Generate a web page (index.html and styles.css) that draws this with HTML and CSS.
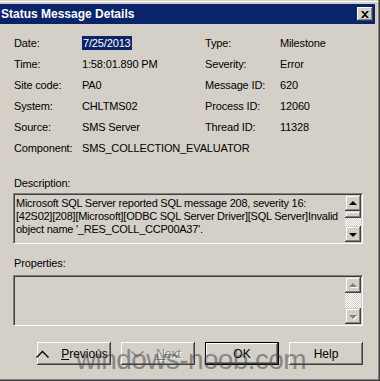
FILE: index.html
```html
<!DOCTYPE html>
<html lang="en">
<head>
    <meta charset="UTF-8">
    <title>Status Message Details</title>
    <link rel="stylesheet" href="styles.css">
</head>
<body>
    <div class="window">
        <div class="titlebar">
            <span class="title">Status Message Details</span>
            <span class="close">
                <svg width="8" height="7" viewBox="0 0 8 7"><path d="M0 0h2l2 2 2-2h2L5 3.5 8 7H6L4 5 2 7H0l3-3.5z" fill="#000"/></svg>
            </span>
        </div>

        <div class="content">
            <div class="fields">
                <span>Date:</span><span><span class="selected">7/25/2013</span></span>
                <span>Type:</span><span>Milestone</span>
                <span>Time:</span><span>1:58:01.890 PM</span>
                <span>Severity:</span><span>Error</span>
                <span>Site code:</span><span>PA0</span>
                <span>Message ID:</span><span>620</span>
                <span>System:</span><span>CHLTMS02</span>
                <span>Process ID:</span><span>12060</span>
                <span>Source:</span><span>SMS Server</span>
                <span>Thread ID:</span><span>11328</span>
                <span>Component:</span><span class="wide">SMS_COLLECTION_EVALUATOR</span>
            </div>

            <div class="group-label desc-label">Description:</div>
            <div class="sunken">
                <div class="text">Microsoft SQL Server reported SQL message 208, severity 16:<br>[42S02][208][Microsoft][ODBC SQL Server Driver][SQL Server]Invalid<br>object name '_RES_COLL_CCP00A37'.</div>
                <div class="scrollbar">
                    <span class="sb-btn"><span class="arrow up"></span></span>
                    <span class="sb-btn thumb"></span>
                    <span class="track"></span>
                    <span class="sb-btn"><span class="arrow down"></span></span>
                </div>
            </div>

            <div class="group-label props-label">Properties:</div>
            <div class="sunken">
                <div class="text"></div>
                <div class="scrollbar">
                    <span class="sb-btn"><span class="arrow up off"></span></span>
                    <span class="track"></span>
                    <span class="sb-btn"><span class="arrow down off"></span></span>
                </div>
            </div>

            <div class="buttons">
                <button class="button">
                    <svg class="chev" width="13" height="8" viewBox="0 0 13 8"><path d="M0.5 7.5L6.5 1.5L12.5 7.5" stroke="#000" stroke-width="1.4" fill="none"/></svg>
                    <span><u>P</u>revious</span>
                </button>
                <button class="button disabled">
                    <svg class="chev" width="13" height="8" viewBox="0 0 13 8"><path d="M0.5 1.5L6.5 7L12.5 1.5" stroke="#808080" stroke-width="1.4" fill="none"/></svg>
                    <span><u>N</u>ext</span>
                </button>
                <button class="button default">OK</button>
                <button class="button">Help</button>
            </div>
        </div>

        <div class="watermark">windows-noob.com</div>
    </div>
</body>
</html>
```

FILE: styles.css
```css
body {
    margin: 0;
    background: #d4d0c8;
    font-family: 'Liberation Sans', Arial, sans-serif;
    font-size: 11px;
    letter-spacing: -0.15px;
    color: #000;
}
.window {
    position: relative;
    width: 380px;
    height: 381px;
    box-sizing: border-box;
    padding: 4px 4px 0 0;
    background: #d4d0c8;
    border-right: 1px solid #404040;
    border-bottom: 1px solid #404040;
    box-shadow: inset -1px -1px #808080, inset 0 1px #d4d0c8, inset 0 2px #fff;
    overflow: hidden;
}
.titlebar {
    height: 20px;
    background: #0a246a;
    color: #fff;
    display: flex;
    align-items: center;
    justify-content: space-between;
    padding: 0 2px 0 1px;
}
.title {
    font-weight: bold;
    font-size: 12px;
    letter-spacing: 0;
}
.close {
    width: 16px;
    height: 14px;
    box-sizing: border-box;
    background: #d4d0c8;
    display: flex;
    align-items: center;
    justify-content: center;
    box-shadow: inset -1px -1px #404040, inset 1px 1px #fff, inset -2px -2px #808080;
}
.content {
    padding: 0 12px 0 13px;
}
.fields {
    display: grid;
    grid-template-columns: 68px 123px 75px auto;
    grid-auto-rows: 21px;
    align-items: center;
    margin: 8px 0 0 1px;
}
.fields .wide {
    grid-column: 2 / 5;
}
.selected {
    background: #0a246a;
    color: #fff;
    padding: 1px 1px;
}
.group-label {
    line-height: 13px;
    padding-left: 1px;
}
.desc-label {
    margin: 19px 0 3px;
}
.props-label {
    margin: 13px 0 5px;
}
.sunken {
    height: 51px;
    box-sizing: border-box;
    display: flex;
    border: 1px solid;
    border-color: #808080 #fff #fff #808080;
    box-shadow: inset 1px 1px #404040, inset -1px -1px #d4d0c8;
    padding: 1px;
}
.text {
    flex: 1;
    padding: 2px 0 0 1px;
    line-height: 13px;
    letter-spacing: -0.25px;
    white-space: nowrap;
    overflow: hidden;
}
.scrollbar {
    width: 16px;
    display: flex;
    flex-direction: column;
}
.sb-btn {
    height: 16px;
    flex: none;
    box-sizing: border-box;
    background: #d4d0c8;
    display: flex;
    align-items: center;
    justify-content: center;
    box-shadow: inset -1px -1px #404040, inset 1px 1px #d4d0c8, inset -2px -2px #808080, inset 2px 2px #fff;
}
.sb-btn.thumb {
    height: 7px;
}
.track {
    flex: 1;
    background: repeating-conic-gradient(#fff 0 25%, #d4d0c8 0 50%) 0 0 / 2px 2px;
}
.arrow {
    width: 0;
    height: 0;
    border-left: 4px solid transparent;
    border-right: 4px solid transparent;
}
.arrow.up {
    border-bottom: 4px solid #000;
    margin-top: -1px;
}
.arrow.down {
    border-top: 4px solid #000;
    margin-top: 1px;
}
.arrow.up.off {
    border-bottom-color: #808080;
    filter: drop-shadow(1px 1px 0 #fff);
}
.arrow.down.off {
    border-top-color: #808080;
    filter: drop-shadow(1px 1px 0 #fff);
}
.buttons {
    display: flex;
    justify-content: flex-end;
    gap: 10px;
    margin-top: 16px;
}
.button {
    width: 74px;
    height: 23px;
    box-sizing: border-box;
    border: none;
    background: #d4d0c8;
    font: inherit;
    font-size: 12px;
    color: #000;
    display: flex;
    align-items: center;
    justify-content: center;
    gap: 0;
    padding: 0;
    box-shadow: inset -1px -1px #404040, inset 1px 1px #fff, inset -2px -2px #808080;
}
.button .chev {
    margin-right: 12px;
    margin-left: -4px;
}
.button.disabled {
    color: #808080;
    text-shadow: 1px 1px 0 #fff;
}
.button.default {
    border: 1px solid #000;
}
.watermark {
    position: absolute;
    left: 76px;
    top: 344px;
    font-size: 28px;
    letter-spacing: -0.6px;
    color: rgba(70, 70, 70, 0.55);
    pointer-events: none;
}
```
